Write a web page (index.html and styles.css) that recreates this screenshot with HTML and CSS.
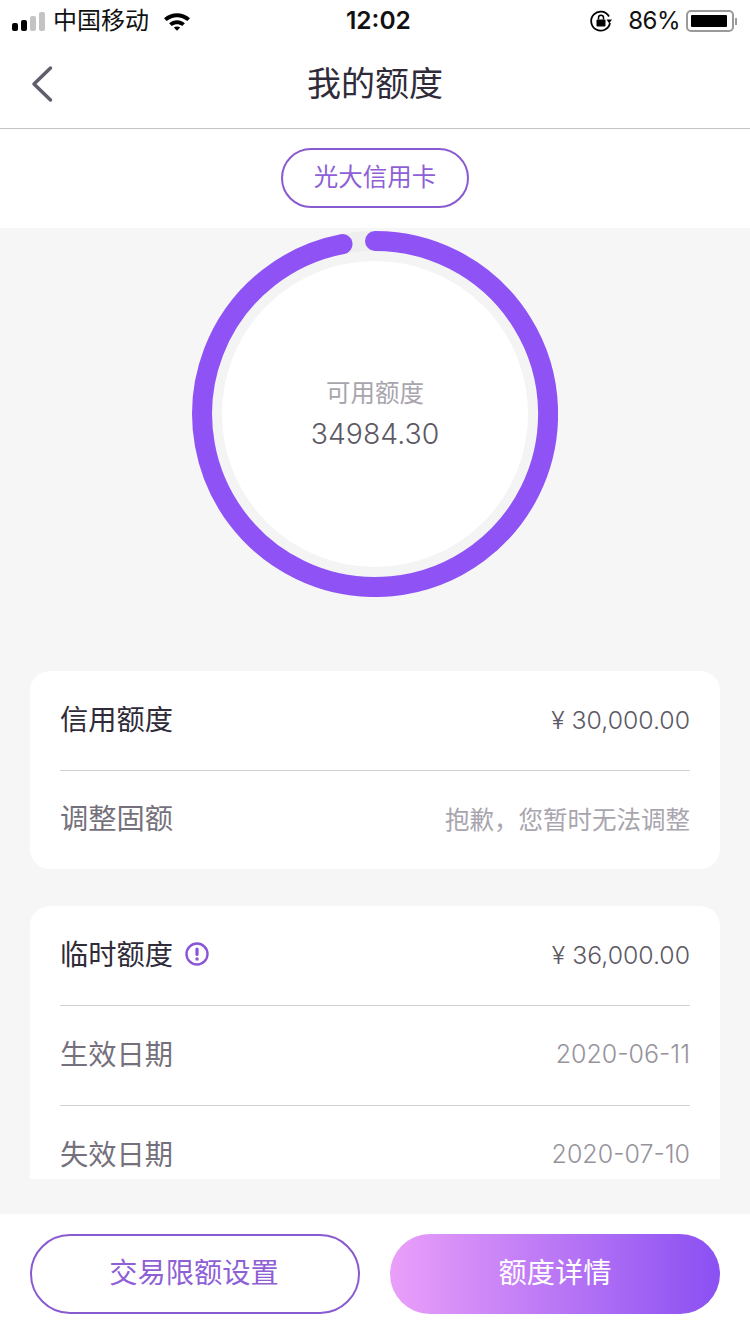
FILE: index.html
```html
<!DOCTYPE html>
<html lang="en">

<head>
  <meta charset="UTF-8" />
  <meta name="viewport" content="width=device-width, initial-scale=1.0" />
  <title>我的额度</title>
  <link rel="stylesheet" href="styles.css">
</head>

<body>
  <div class="page">
    <div class="status">
      <div class="status-left">
        <div class="signal">
          <i class="on"></i><i class="on"></i><i></i><i></i>
        </div>
        <span class="carrier">中国移动</span>
        <svg class="wifi" width="28" height="20" viewBox="0 0 28 20">
          <path d="M1 7.2C8.500.6 19.500.6 27 7.200L24.300 10C18.300 4.900 9.700 4.900 3.700 10Z" fill="#000" />
          <path d="M6.100 12.300C10.800 8.300 17.200 8.300 21.900 12.300L19.200 15C16.100 12.500 11.900 12.500 8.800 15Z" fill="#000" />
          <path d="M10.800 16.600C12.700 15.100 15.300 15.100 17.200 16.600L14 19.800Z" fill="#000" />
        </svg>
      </div>
      <span class="time">12:02</span>
      <div class="status-right">
        <svg class="lock" width="24" height="24" viewBox="0 0 24 24">
          <path d="M20 7.500A9.500 9.500 0 1 0 21 14" fill="none" stroke="#000" stroke-width="1.800" />
          <path d="M17.500 10.500H23L20.200 14.500Z" fill="#000" />
          <rect x="7.500" y="10.500" width="9" height="7" rx="1" fill="#000" />
          <path d="M9.500 10.500V8.800a2.500 2.500 0 0 1 5 0v1.700" fill="none" stroke="#000" stroke-width="1.500" />
        </svg>
        <span class="battery-num">86%</span>
        <div class="battery">
          <div class="battery-level"></div>
        </div>
        <div class="battery-tip"></div>
      </div>
    </div>

    <div class="nav">
      <svg class="back" width="24" height="38" viewBox="0 0 24 38">
        <path d="M20.500 3L4 19l16.500 16" fill="none" stroke="#5f5f6b" stroke-width="3.500" stroke-linecap="round" stroke-linejoin="round" />
      </svg>
      <h1>我的额度</h1>
    </div>

    <div class="tabs">
      <a class="tab">光大信用卡</a>
    </div>

    <div class="content">
      <div class="ring-box">
        <svg class="ring" width="366" height="366" viewBox="0 0 366 366">
          <circle cx="183" cy="183" r="173" fill="none" stroke="#eeeeee" stroke-width="20" />
          <circle cx="183" cy="183" r="158" fill="#fff" stroke="#f4f4f4" stroke-width="10" />
          <path d="M183 10A173 173 0 1 1 150.500 13.100" fill="none" stroke="#8f53f5" stroke-width="20" stroke-linecap="round" />
        </svg>
        <div class="ring-text">
          <div class="ring-label">可用额度</div>
          <div class="ring-num">34984.30</div>
        </div>
      </div>

      <div class="scroll">
        <div class="card">
          <div class="row">
            <span class="name dark">信用额度</span>
            <span class="val num">¥ 30,000.00</span>
          </div>
          <div class="row">
            <span class="name">调整固额</span>
            <span class="val light cjk">抱歉，您暂时无法调整</span>
          </div>
        </div>

        <div class="card">
          <div class="row">
            <span class="name dark">临时额度</span>
            <svg class="info" width="24" height="24" viewBox="0 0 24 24">
              <circle cx="12" cy="12" r="10.500" fill="none" stroke="#8a55d8" stroke-width="2.400" />
              <rect x="10.400" y="5.500" width="3.200" height="8.500" rx="1.600" fill="#8a55d8" />
              <circle cx="12" cy="17" r="1.700" fill="#8a55d8" />
            </svg>
            <span class="val num">¥ 36,000.00</span>
          </div>
          <div class="row">
            <span class="name">生效日期</span>
            <span class="val light date">2020-06-11</span>
          </div>
          <div class="row">
            <span class="name">失效日期</span>
            <span class="val light date">2020-07-10</span>
          </div>
        </div>
      </div>
    </div>

    <div class="bottom">
      <a class="btn btn-line">交易限额设置</a>
      <a class="btn btn-fill">额度详情</a>
    </div>
  </div>
</body>

</html>
```

FILE: styles.css
```css
* {
  box-sizing: border-box;
  margin: 0;
  padding: 0;
  font-family: 'Inter', 'Noto Sans CJK SC', sans-serif;
}

body {
  background: #fff;
}

.page {
  width: 750px;
  height: 1334px;
  display: flex;
  flex-direction: column;
  overflow: hidden;
}

.status {
  height: 42px;
  padding: 0 12px;
  display: flex;
  align-items: center;
  justify-content: space-between;
  color: #111;
  position: relative;
}

.status-left,
.status-right {
  display: flex;
  align-items: center;
}

.signal {
  display: flex;
  align-items: flex-end;
  gap: 3px;
  width: 34px;
}

.signal i {
  width: 6px;
  background: #c4c4c4;
  border-radius: 2px;
}

.signal i:nth-child(1) { height: 8px; }
.signal i:nth-child(2) { height: 11px; }
.signal i:nth-child(3) { height: 15px; }
.signal i:nth-child(4) { height: 19px; }

.signal i.on {
  background: #000;
}

.carrier {
  margin-left: 7px;
  font-size: 24px;
  line-height: 40px;
}

.wifi {
  margin-left: 14px;
}

.time {
  position: absolute;
  left: 346px;
  top: 2px;
  font-size: 24.500px;
  font-weight: 600;
  line-height: 36px;
}

.status-right {
  margin-right: 1px;
}

.battery-num {
  margin-left: 15px;
  font-size: 24px;
  letter-spacing: -0.500px;
  line-height: 40px;
}

.battery {
  width: 48px;
  height: 22px;
  margin-left: 6px;
  padding: 3px;
  border: 2px solid #9a9a9a;
  border-radius: 5px;
}

.battery-level {
  width: 36px;
  height: 100%;
  background: #000;
  border-radius: 1px;
}

.battery-tip {
  width: 2px;
  height: 7px;
  margin-left: 1px;
  background: #9a9a9a;
}

.nav {
  height: 87px;
  padding-bottom: 8px;
  border-bottom: 1px solid #c4c4c4;
  display: flex;
  align-items: center;
  justify-content: center;
  position: relative;
}

.back {
  position: absolute;
  left: 30px;
  top: 23px;
}

h1 {
  font-size: 34px;
  font-weight: 400;
  color: #2f2b38;
}

.tabs {
  height: 99px;
  padding-top: 19px;
  display: flex;
  justify-content: center;
}

.tab {
  width: 188px;
  height: 60px;
  border: 2px solid #8a5bd0;
  border-radius: 30px;
  font-size: 24.500px;
  line-height: 54px;
  text-align: center;
  color: #8f5fd6;
}

.content {
  height: 986px;
  background: #f6f6f6;
  padding: 3px 30px 0;
}

.ring-box {
  width: 366px;
  height: 366px;
  margin: 0 auto 74px;
  position: relative;
}

.ring {
  display: block;
}

.ring-text {
  position: absolute;
  left: 0;
  right: 0;
  top: 144px;
  text-align: center;
}

.ring-label {
  font-size: 24.500px;
  line-height: 36px;
  color: #a8a5ae;
}

.ring-num {
  margin-top: 3px;
  font-size: 28.400px;
  font-weight: 300;
  line-height: 40px;
  color: #5c5964;
}

.scroll {
  height: 508px;
  overflow: hidden;
}

.card {
  background: #fff;
  border-radius: 20px;
  padding: 0 30px;
  margin-bottom: 37px;
}

.row {
  height: 100px;
  padding-bottom: 7px;
  display: flex;
  align-items: center;
  border-bottom: 1px solid #d2d2d2;
}

.card:first-child .row:last-child {
  height: 98px;
}

.row:last-child {
  border-bottom: none;
}

.name {
  font-size: 28.250px;
  color: #75717c;
}

.name.dark {
  color: #2f2b38;
}

.info {
  margin: 3px 0 0 12px;
}

.val {
  margin-left: auto;
  font-size: 24.800px;
}

.val.num {
  margin-top: 6px;
  font-weight: 300;
  color: #5c5964;
}

.val.light {
  color: #a8a5ae;
}

.val.date {
  margin-top: 3px;
  font-size: 25px;
  font-weight: 300;
  color: #96939c;
}

.val.cjk {
  margin-top: 4px;
  font-size: 24.500px;
}

.bottom {
  flex: 1;
  padding: 20px 30px 0;
  display: flex;
  gap: 30px;
  align-items: flex-start;
}

.btn {
  flex: 0 0 330px;
  height: 80px;
  border-radius: 40px;
  font-size: 28.250px;
  line-height: 78px;
  text-align: center;
}

.btn-line {
  border: 2px solid #8a5bd0;
  padding-right: 2px;
  line-height: 74px;
  color: #8f5fd6;
}

.btn-fill {
  background: linear-gradient(90deg, #ea9ff9, #8a50f2);
  color: #fff;
}
```
